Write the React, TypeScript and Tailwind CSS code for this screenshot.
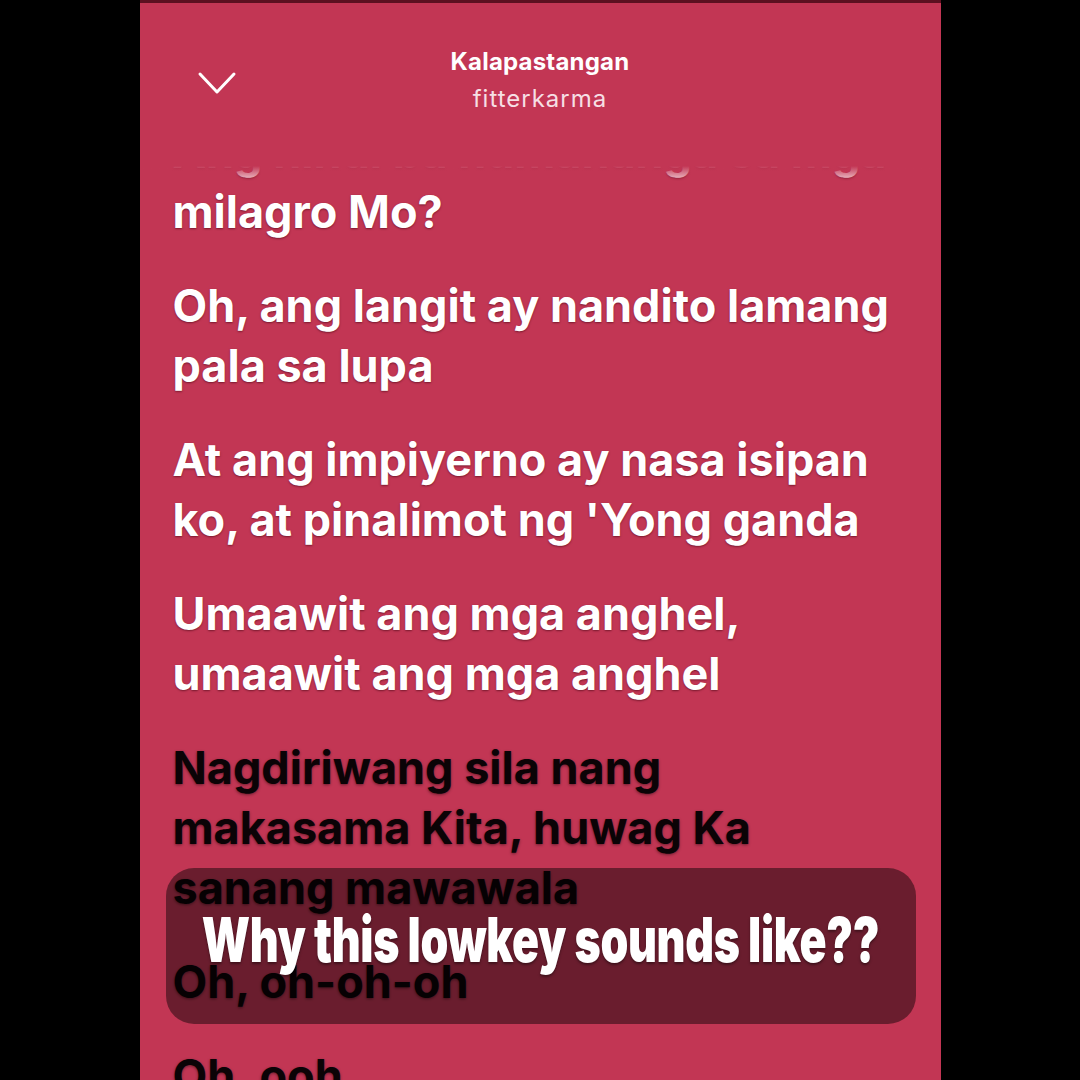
const lyricBlocks: { lines: string[]; tone: 'past' | 'next' }[] = [
    { lines: ['Ang hindi ba humahanga sa mga', 'milagro Mo?'], tone: 'past' },
    { lines: ['Oh, ang langit ay nandito lamang', 'pala sa lupa'], tone: 'past' },
    { lines: ['At ang impiyerno ay nasa isipan', "ko, at pinalimot ng 'Yong ganda"], tone: 'past' },
    { lines: ['Umaawit ang mga anghel,', 'umaawit ang mga anghel'], tone: 'past' },
    { lines: ['Nagdiriwang sila nang', 'makasama Kita, huwag Ka', 'sanang mawawala'], tone: 'next' },
    { lines: ['Oh, oh-oh-oh'], tone: 'next' },
    { lines: ['Oh, ooh'], tone: 'next' },
];

const ChevronDown = () => (
    <svg width="40" height="26" viewBox="0 0 40 26" fill="none">
        <path d="M3 4 L20 22 L37 4" stroke="white" strokeWidth="3" strokeLinecap="round" strokeLinejoin="round" />
    </svg>
);

export default function App() {
    return (
        <div className="w-[1080px] h-[1080px] bg-black flex justify-center overflow-hidden">
            <div className="relative w-[801px] h-full bg-[#c23654] flex flex-col overflow-hidden">
                <div className="h-[3px] bg-[#5c1020] shrink-0" />

                {/* header */}
                <div className="relative h-[163px] shrink-0 flex items-start px-[57px] pt-[67px]">
                    <ChevronDown />
                    <div className="absolute left-0 right-0 top-[43px] flex flex-col items-center text-white font-['Inter',sans-serif]">
                        <span className="text-[24px] font-bold leading-[32px] tracking-[0.2px]">Kalapastangan</span>
                        <span className="text-[24px] font-normal leading-[32px] tracking-[1px] text-[#f6dfe4] mt-[5px]">fitterkarma</span>
                    </div>
                </div>

                {/* lyrics */}
                <div className="relative flex-1 overflow-hidden">
                    <div className="-mt-[44px] pl-[33px] flex flex-col gap-[34px] font-['Inter',sans-serif] font-bold text-[45px] leading-[60px] tracking-[0px]">
                        {lyricBlocks.map((block, i) => (
                            <div
                                key={i}
                                className={
                                    block.tone === 'past'
                                        ? 'text-white [text-shadow:0_1px_2px_rgba(60,0,15,0.55)]'
                                        : 'text-[#0b0306] [text-shadow:0_1px_3px_rgba(0,0,0,0.45)]'
                                }
                            >
                                {block.lines.map((line, j) => (
                                    <div key={j} className="whitespace-nowrap">
                                        {line}
                                    </div>
                                ))}
                            </div>
                        ))}
                    </div>
                    <div className="absolute left-0 right-0 top-0 h-[14px] bg-gradient-to-b from-[#c23654] to-[#c23654]/30" />
                </div>

                {/* caption overlay */}
                <div className="absolute left-[26px] top-[868px] w-[750px] h-[156px] rounded-[28px] bg-black/45 flex items-center justify-center">
                    <span className="block -mt-[12px] text-white font-['Inter',sans-serif] font-black text-[62px] leading-none tracking-[-0.5px] scale-x-[0.72] whitespace-nowrap [text-shadow:0_2px_3px_rgba(0,0,0,0.4)]">
                        Why this lowkey sounds like??
                    </span>
                </div>
            </div>
        </div>
    );
}
